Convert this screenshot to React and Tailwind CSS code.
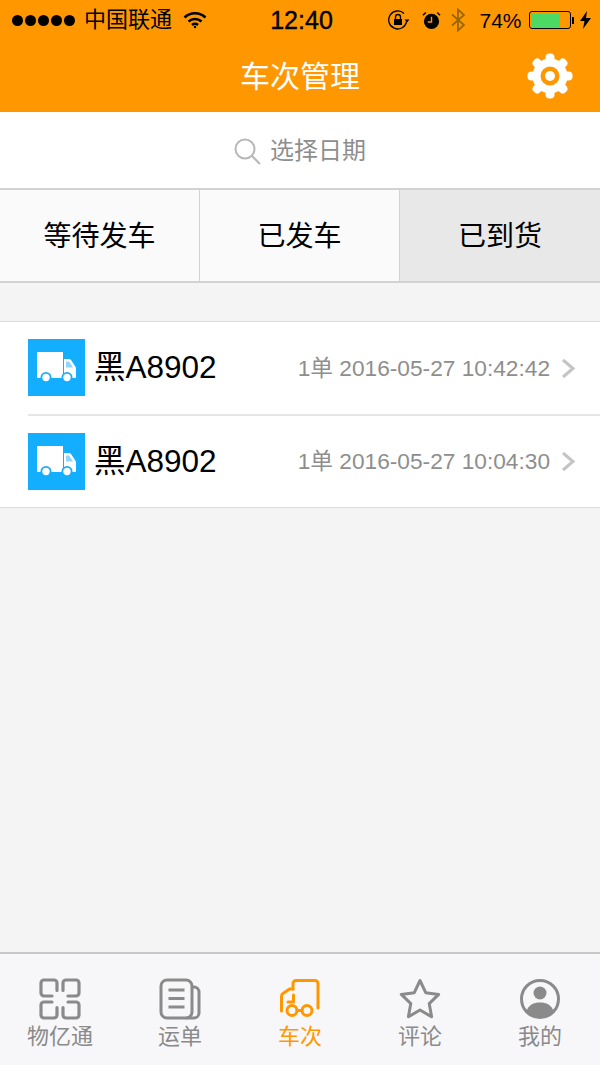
const tabs = [
    { label: '等待发车' },
    { label: '已发车' },
    { label: '已到货', active: true },
];

const trips = [
    { id: 1, plate: '黑A8902', info: '1单 2016-05-27 10:42:42' },
    { id: 2, plate: '黑A8902', info: '1单 2016-05-27 10:04:30' },
];

function TruckTile({ first }) {
    return (
        <div className={`w-[57px] h-[57px] shrink-0 bg-[#14aeff] flex items-center justify-center ${first ? 'mb-[2px]' : ''}`}>
            <svg width="39" height="31" viewBox="0 0 39 31" fill="#fff">
                <path d="M1 0H26V26H1a1 1 0 0 1-1-1V1a1 1 0 0 1 1-1Z" />
                <path d="M27 7h5c.8 0 1.500.4 2 1l4 6c.6.9 1 1.700 1 2.700V25a1 1 0 0 1-1 1H27Z" />
                <path d="M29 9.500v6h7l-3.800-6Z" fill="#8fd6ff" />
                <circle cx="9" cy="25.500" r="5.500" fill="#14aeff" />
                <circle cx="30" cy="25.500" r="5.500" fill="#14aeff" />
                <circle cx="9" cy="25.500" r="3.700" />
                <circle cx="30" cy="25.500" r="3.700" />
            </svg>
        </div>
    );
}

function GearIcon() {
    return (
        <svg width="46" height="46" viewBox="0 0 46 46" fill="none">
            <circle cx="23" cy="23" r="13.500" stroke="#fff" strokeWidth="8" />
            <circle cx="23" cy="23" r="5" fill="#fff" />
            <g fill="#fff">
                {[0, 45, 90, 135, 180, 225, 270, 315].map(a => (
                    <rect key={a} x="18.500" y="0.500" width="9" height="12" rx="4" transform={`rotate(${a} 23 23)`} />
                ))}
            </g>
        </svg>
    );
}

function StatusBar() {
    return (
        <div className="h-10 pl-3 pr-[9px] flex items-center text-black">
            <div className="flex-1 flex items-center">
                <div className="flex gap-[2px]">
                    {[1, 2, 3, 4, 5].map(n => <span key={n} className="w-[11px] h-[11px] rounded-full bg-black" />)}
                </div>
                <span className="ml-[9px] text-[22px] leading-none">中国联通</span>
                <svg className="ml-[11px]" width="24" height="18" viewBox="0 0 24 18" fill="none" stroke="#000" strokeWidth="2.600">
                    <path d="M1.500 6.500a15 15 0 0 1 21 0" />
                    <path d="M5.500 10.500a9.500 9.500 0 0 1 13 0" />
                    <path d="M9 14a4.500 4.500 0 0 1 6 0" />
                    <circle cx="12" cy="16" r="1.200" fill="#000" stroke="none" />
                </svg>
            </div>
            <span className="text-[25px] leading-none [-webkit-text-stroke:0.4px_black]">12:40</span>
            <div className="flex-1 flex items-center justify-end">
                <svg width="22" height="20" viewBox="0 0 22 20" fill="none" stroke="#000" strokeWidth="1.300">
                    <path d="M18.500 12A9 9 0 1 1 16 3.500" />
                    <path d="M21.500 9.500h-5l2.500 3Z" fill="#000" stroke="none" />
                    <rect x="6" y="9" width="8" height="6" fill="#000" stroke="none" />
                    <path d="M7.500 9V7a2.500 2.500 0 0 1 5 0v2" />
                </svg>
                <svg className="ml-[12px]" width="19" height="19" viewBox="0 0 20 19">
                    <circle cx="10" cy="10.500" r="8" fill="#000" />
                    <path d="M10 5.500v5.500H6" stroke="#ff9800" strokeWidth="1.500" fill="none" />
                    <path d="M1 4l3-3M19 4l-3-3" stroke="#000" strokeWidth="1.500" />
                </svg>
                <svg className="ml-[10px]" width="14" height="24" viewBox="0 0 14 24" fill="none" stroke="#9a6500" strokeWidth="1.800">
                    <path d="M1 6.500l12 10.500-6 5.500V1.500l6 5.500L1 17.500" />
                </svg>
                <span className="ml-[14px] text-[21px] leading-none">74%</span>
                <div className="ml-[7px] w-[42px] h-[18px] rounded-[3px] border border-black p-[1.500px]">
                    <div className="h-full w-[29px] bg-[#4cd964]" />
                </div>
                <div className="ml-[1px] w-[2.500px] h-[7px] bg-black" />
                <svg className="ml-[6px]" width="11" height="18" viewBox="0 0 11 18" fill="#000">
                    <path d="M7 0 0 10h4.500L3 18l8-11H6Z" />
                </svg>
            </div>
        </div>
    );
}

function TabItem({ label, active, children }) {
    return (
        <div className="flex flex-col items-center">
            {children}
            <span className={`mt-[4px] text-[22px] leading-[26px] ${active ? 'text-[#ff9800]' : 'text-[#8a8a8a]'}`}>{label}</span>
        </div>
    );
}

function TabBar() {
    const stroke = '#8a8a8a';
    const orange = '#ff9800';
    return (
        <footer className="h-[113px] shrink-0 border-t-2 border-[#c8c8c8] bg-[#f7f7f9] grid grid-cols-5 pt-[24px]">
            <TabItem label="物亿通">
                <svg width="42" height="42" viewBox="0 0 42 42" fill="none" stroke={stroke} strokeWidth="3.200" strokeLinecap="round">
                    {/* four rounded squares, each left open at the inner corner */}
                    <path d="M18 12.500V5a3 3 0 0 0-3-3H5a3 3 0 0 0-3 3v10a3 3 0 0 0 3 3h8" />
                    <path d="M24 12.500V5a3 3 0 0 1 3-3h10a3 3 0 0 1 3 3v10a3 3 0 0 1-3 3h-8" />
                    <path d="M18 29.500V37a3 3 0 0 1-3 3H5a3 3 0 0 1-3-3V27a3 3 0 0 1 3-3h8" />
                    <path d="M24 29.500V37a3 3 0 0 0 3 3h10a3 3 0 0 0 3-3V27a3 3 0 0 0-3-3h-8" />
                </svg>
            </TabItem>
            <TabItem label="运单">
                <svg width="42" height="42" viewBox="0 0 42 42" fill="none" stroke={stroke} strokeWidth="3">
                    <rect x="2" y="2" width="31" height="38" rx="6" />
                    <path d="M33 9h2a5 5 0 0 1 5 5v21a5 5 0 0 1-5 5h-8" />
                    <path d="M9.500 12h16M9.500 20.500h16M9.500 29h16" />
                </svg>
            </TabItem>
            <TabItem label="车次" active>
                <svg width="42" height="42" viewBox="0 0 42 42" fill="none" stroke={orange} strokeWidth="3" strokeLinecap="round" strokeLinejoin="round">
                    <path d="M14 11V5.500a3 3 0 0 1 3-3h19a3 3 0 0 1 3 3V30" />
                    <path d="M14 11h-3.500L4 15.500a3.500 3.500 0 0 0-1.500 3V33" />
                    <path d="M14.500 17v7H9" />
                    <circle cx="13" cy="32.500" r="5" />
                    <circle cx="28" cy="32.500" r="5" />
                    <path d="M18 32.500h5" />
                </svg>
            </TabItem>
            <TabItem label="评论">
                <svg width="42" height="42" viewBox="0 0 42 42" fill="none" stroke={stroke} strokeWidth="3" strokeLinejoin="round">
                    <path d="M21 2.500l5.700 12.200 13 1.700-9.500 9.200 2.400 13.200L21 32l-11.600 6.800 2.400-13.200-9.500-9.200 13-1.700Z" />
                </svg>
            </TabItem>
            <TabItem label="我的">
                <svg width="42" height="42" viewBox="0 0 42 42" fill="none">
                    <circle cx="21" cy="21" r="18.500" stroke={stroke} strokeWidth="3" />
                    <circle cx="21" cy="15" r="6.500" fill={stroke} />
                    <path d="M7.500 33c2-6 7-8.500 13.500-8.500S32.500 27 34.500 33A18.500 18.500 0 0 1 7.500 33Z" fill={stroke} />
                </svg>
            </TabItem>
        </footer>
    );
}

export default function App() {
    return (
        <div className="w-[600px] h-[1065px] flex flex-col overflow-hidden bg-[#f4f4f4] font-['Liberation_Sans','Noto_Sans_CJK_SC',sans-serif]">
            <header className="h-[112px] shrink-0 bg-[#ff9800]">
                <StatusBar />
                <div className="h-[72px] pr-[27px] grid grid-cols-[1fr_auto_1fr] items-center">
                    <span className="col-start-2 pl-[27px] mt-[2px] text-[30px] leading-none text-white">车次管理</span>
                    <div className="justify-self-end"><GearIcon /></div>
                </div>
            </header>

            <div className="h-[76px] pt-[2px] shrink-0 bg-white flex items-center justify-center gap-[9px]">
                <svg width="27" height="27" viewBox="0 0 27 27" fill="none" stroke="#b8b8b8" strokeWidth="2">
                    <circle cx="11" cy="11" r="9.500" />
                    <path d="M18 18l8 8" />
                </svg>
                <span className="text-[24px] leading-none text-[#8e8e8e]">选择日期</span>
            </div>

            <div className="h-[95px] shrink-0 grid grid-cols-[199px_200px_1fr] border-y-2 border-[#d2d2d2]">
                {tabs.map((tab, i) => (
                    <div key={tab.label} className={`pt-[2px] flex items-center justify-center text-[28px] text-black ${tab.active ? 'bg-[#e8e8e8]' : 'bg-[#fafafa]'} ${i > 0 ? 'border-l border-[#d2d2d2]' : ''}`}>
                        {tab.label}
                    </div>
                ))}
            </div>

            <main className="flex-1 pt-[38px]">
                <div className="bg-white border-y border-[#dcdcdc]">
                    {trips.map((trip, i) => (
                        <div key={trip.id} className="pl-[28px]">
                            <div className={`pr-[24px] flex items-center ${i > 0 ? 'h-[93px] border-t-2 border-[#e6e6e6]' : 'h-[92px]'}`}>
                                <TruckTile first={i === 0} />
                                <span className="ml-[9px] text-[31.500px] leading-none text-black">{trip.plate}</span>
                                <span className="ml-auto text-[22.700px] leading-none text-[#8e8e8e]">{trip.info}</span>
                                <svg className="ml-[11px]" width="15" height="21" viewBox="0 0 15 21" fill="none" stroke="#c4c4c4" strokeWidth="3">
                                    <path d="M2 2l10 8.500L2 19" />
                                </svg>
                            </div>
                        </div>
                    ))}
                </div>
            </main>

            <TabBar />
        </div>
    );
}
